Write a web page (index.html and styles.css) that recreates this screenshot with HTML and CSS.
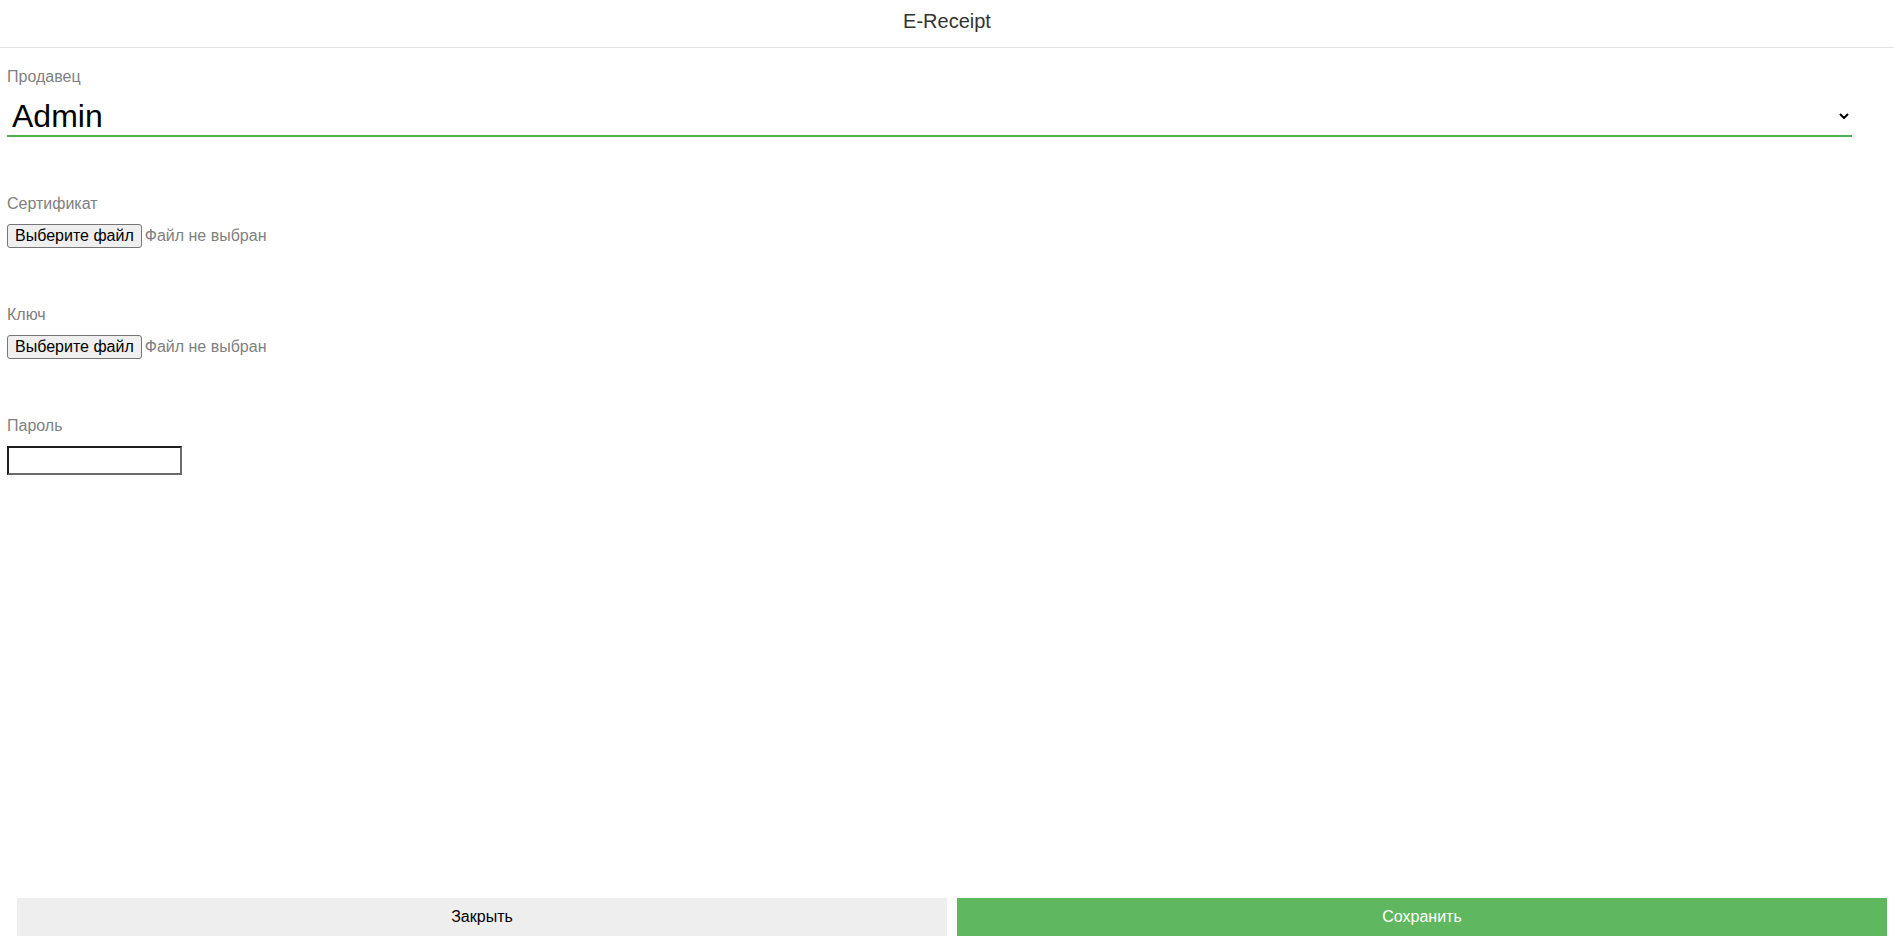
FILE: index.html
```html
<!DOCTYPE html>
<html lang="ru">
<head>
    <meta charset="UTF-8">
    <meta name="viewport" content="width=device-width, initial-scale=1.0">
    <title>E-Receipt</title>

    <!-- CSS Styles -->
    <link rel="stylesheet" href="styles.css">
</head>
<body>

    <!-- Header -->
    <div class="header">E-Receipt</div>

    <!-- Settings Form -->
    <div class="form">
        <div class="field">
            <label class="field-label" for="seller">Продавец</label>
            <div class="select-wrap">
                <select id="seller" class="seller-select">
                    <option>Admin</option>
                </select>
                <svg class="chevron" width="10" height="6" viewBox="0 0 10 6">
                    <path d="M1 1 L5 5 L9 1" fill="none" stroke="#000" stroke-width="2"/>
                </svg>
            </div>
        </div>

        <div class="field">
            <label class="field-label">Сертификат</label>
            <div class="file-row">
                <button type="button" class="file-btn">Выберите файл</button>
                <span class="file-name">Файл не выбран</span>
            </div>
        </div>

        <div class="field">
            <label class="field-label">Ключ</label>
            <div class="file-row">
                <button type="button" class="file-btn">Выберите файл</button>
                <span class="file-name">Файл не выбран</span>
            </div>
        </div>

        <div class="field">
            <label class="field-label" for="password">Пароль</label>
            <input type="password" id="password" class="password-input">
        </div>
    </div>

    <!-- Footer Buttons -->
    <div class="footer">
        <button type="button" class="footer-btn btn-close">Закрыть</button>
        <button type="button" class="footer-btn btn-save">Сохранить</button>
    </div>

</body>
</html>
```

FILE: styles.css
```css
/* Body and General Styling */
html, body {
    height: 100%;
}

body {
    margin: 0;
    background-color: #fff;
    color: #000;
    font-family: "Liberation Sans", Arial, sans-serif;
    font-size: 16px;
    display: flex;
    flex-direction: column;
}

.header {
    padding: 10px 0 14px;
    line-height: 23px;
    font-size: 20px;
    color: #333;
    text-align: center;
    border-bottom: 1px solid #e3e3e3;
}

.form {
    flex: 1;
    padding: 18px 0 0 7px;
}

.field {
    margin-bottom: 56px;
}

.field-label {
    display: block;
    line-height: 22px;
    color: #808080;
    margin-bottom: 9px;
}

.select-wrap {
    display: flex;
    align-items: center;
    margin-right: 42px;
    border-bottom: 2px solid #4caf50;
}

.seller-select {
    flex: 1;
    height: 38px;
    padding: 0 0 0 5px;
    border: none;
    background: transparent;
    font-family: "Liberation Sans", Arial, sans-serif;
    font-size: 32px;
    color: #000;
    appearance: none;
    -webkit-appearance: none;
    outline: none;
}

.chevron {
    margin-right: 3px;
}

.file-row {
    display: flex;
    align-items: center;
    height: 24px;
}

.file-btn {
    box-sizing: border-box;
    height: 24px;
    padding: 0 7px;
    font-family: "Liberation Sans", Arial, sans-serif;
    font-size: 16px;
    color: #000;
    background-color: #efefef;
    border: 1px solid #767676;
    border-radius: 3px;
}

.file-name {
    margin-left: 3px;
    color: #808080;
}

.password-input {
    box-sizing: border-box;
    width: 175px;
    height: 29px;
    margin: 0;
    padding: 1px 2px;
    font-size: 16px;
    border-style: solid;
    border-width: 2px;
    border-color: #1e1e1e #6b6b6b #6b6b6b #1e1e1e;
    outline: none;
}

.footer {
    display: flex;
    gap: 10px;
    padding: 0 7px 11px 17px;
}

.footer-btn {
    flex: 1;
    height: 38px;
    border: none;
    font-family: "Liberation Sans", Arial, sans-serif;
    font-size: 16px;
    cursor: pointer;
}

.btn-close {
    background-color: #eeeeee;
    color: #000;
}

.btn-save {
    background-color: #5fb760;
    color: #fff;
}
```
